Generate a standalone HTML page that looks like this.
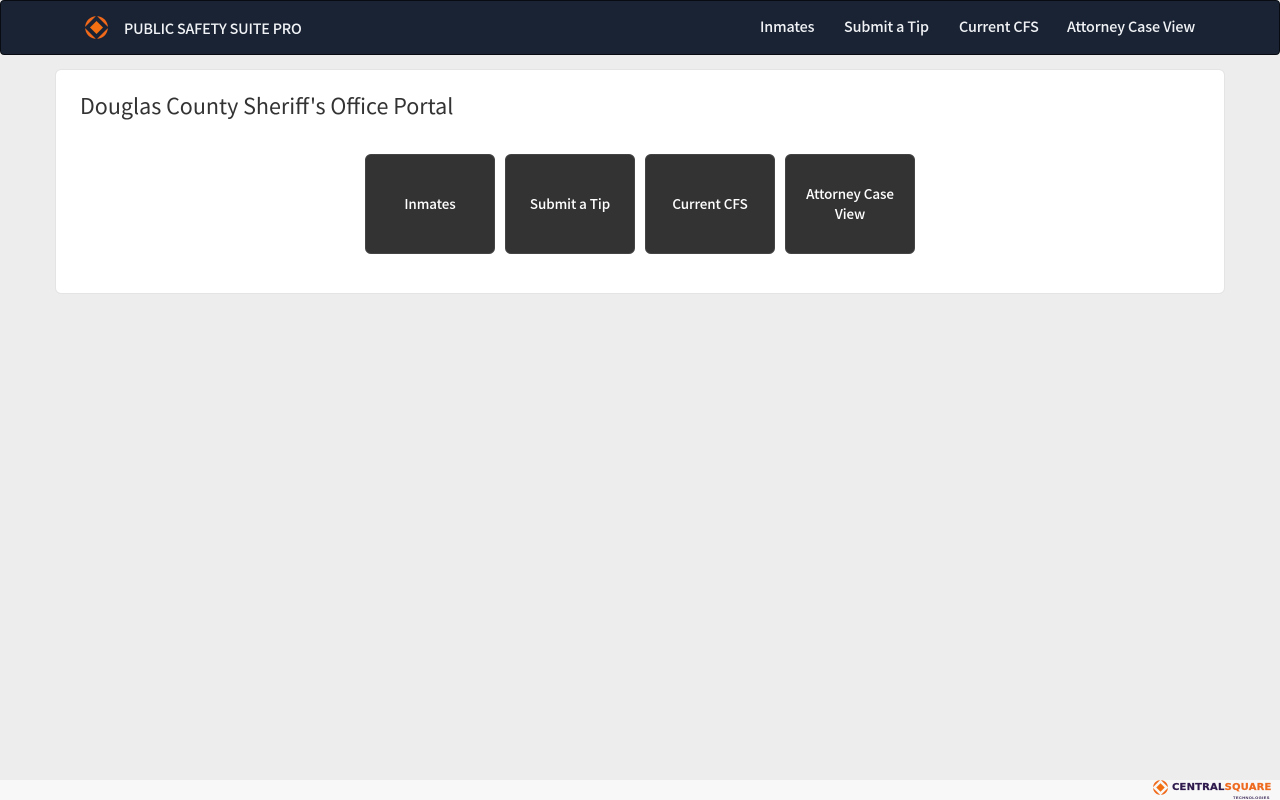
<!DOCTYPE html>
<html lang="en">
<head>
<meta charset="utf-8">
<title>Douglas County Sheriff's Office Portal</title>
<style>
html,body{margin:0;padding:0;width:1280px;height:800px;overflow:hidden;background:#ededed;font-family:"Noto Sans CJK SC","Liberation Sans",sans-serif;}
*{box-sizing:border-box;}
.abs,.t{position:absolute;white-space:nowrap;}
#nav{position:absolute;left:0;top:0;width:1280px;height:55px;background:#192333;border:1px solid #080c12;border-radius:4px;}
.t{line-height:24px;}
.nv{color:#f0f2f5;font-size:14.3px;font-weight:500;top:15px;letter-spacing:-0.12px;}
#card{position:absolute;left:55px;top:69px;width:1170px;height:225px;background:#fff;border:1px solid #e4e4e4;border-radius:6px;}
.btn{position:absolute;top:154px;width:130px;height:100px;background:#333;border:1px solid #444;border-radius:6px;color:#fff;font-size:13.4px;font-weight:500;letter-spacing:-0.05px;line-height:20px;text-align:center;display:flex;align-items:center;justify-content:center;padding:0 15px 2px;}
#foot{position:absolute;left:0;top:780px;width:1280px;height:20px;background:#f8f8f8;}
</style>
</head>
<body>
<div id="nav"></div>
<svg class="abs" style="left:85px;top:16px" width="23" height="23" viewBox="0 0 24 24">
<circle cx="12" cy="12" r="11.9" fill="#f0691a"/>
<path d="M12 -0.5L24.5 12L12 24.5L-0.5 12Z" fill="#192333"/>
<path d="M12 5.2L18.8 12L12 18.8L5.2 12Z" fill="#f26f12"/>
</svg>
<div class="t" style="left:124px;top:17px;color:#f0f2f5;font-size:14.3px;font-weight:500;letter-spacing:-0.17px;">PUBLIC SAFETY SUITE PRO</div>
<div class="t nv" style="left:760px;">Inmates</div>
<div class="t nv" style="left:844px;">Submit a Tip</div>
<div class="t nv" style="left:959px;">Current CFS</div>
<div class="t nv" style="left:1067px;">Attorney Case View</div>

<div id="card"></div>
<div class="t" style="left:80px;top:88px;font-size:21.5px;line-height:36px;color:#333;">Douglas County Sheriff's Office Portal</div>
<div class="btn" style="left:365px;">Inmates</div>
<div class="btn" style="left:505px;">Submit a Tip</div>
<div class="btn" style="left:645px;">Current CFS</div>
<div class="btn" style="left:785px;">Attorney Case View</div>

<div id="foot"></div>
<svg class="abs" style="left:1153px;top:780px" width="15" height="15" viewBox="0 0 24 24">
<circle cx="12" cy="12" r="11.9" fill="#f0691a"/>
<path d="M12 -0.5L24.5 12L12 24.5L-0.5 12Z" fill="#f8f8f8"/>
<path d="M12 5.2L18.8 12L12 18.8L5.2 12Z" fill="#f26f12"/>
</svg>
<div class="t" style="left:1172px;top:781px;font-family:'DejaVu Sans',sans-serif;font-size:10px;line-height:14px;font-weight:700;letter-spacing:0.2px;color:#2f1a4d;-webkit-text-stroke:0.25px #2f1a4d;">CENTRAL<span style="color:#ee6a1f;-webkit-text-stroke:0.25px #ee6a1f;">SQUARE</span></div>
<div class="t" style="left:1233px;top:795px;font-family:'Liberation Sans',sans-serif;font-size:4px;line-height:5px;font-weight:700;letter-spacing:0.4px;color:#2f1a4d;">TECHNOLOGIES</div>
</body>
</html>
